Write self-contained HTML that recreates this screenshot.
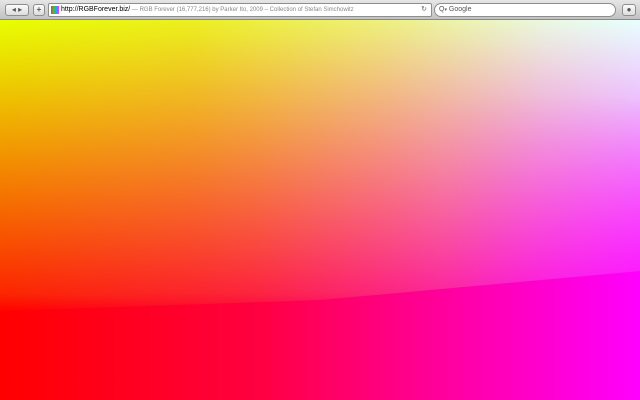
<!DOCTYPE html>
<html><head><meta charset="utf-8"><style>
*{margin:0;padding:0;box-sizing:border-box}
html,body{width:640px;height:400px;overflow:hidden;font-family:"Liberation Sans",sans-serif}
#bar{position:absolute;left:0;top:0;width:640px;height:20px;background:linear-gradient(#e6e6e6,#c2c2c2);border-bottom:1px solid #8a8a8a}
.btn{position:absolute;top:4px;height:12px;border:1px solid #8e8e8e;border-radius:3px;background:linear-gradient(#fbfbfb,#dcdcdc);font-size:8px;color:#555;text-align:center;line-height:10px}
#url{position:absolute;left:48px;top:3px;width:384px;height:14px;background:#fff;border:1px solid #8e8e8e;border-radius:2px;font-size:7px;line-height:12px;white-space:nowrap;overflow:hidden}
#search{position:absolute;left:434px;top:3px;width:182px;height:14px;background:#fff;border:1px solid #8e8e8e;border-radius:7px;font-size:7px;line-height:12px;color:#555;padding-left:4px}
#c{position:absolute;left:0;top:20px;width:640px;height:380px;background:linear-gradient(90deg,#ff0000 0%,#ff0020 20%,#ff0040 40%,#ff0080 60%,#ff00c0 80%,#ff00ff 100%)}
#t{position:absolute;left:0;top:0;width:640px;height:380px;
background:linear-gradient(90deg,#e8ff00 0%,#ecf020 30%,#eef080 60%,#eaf8e0 85%,#e8ffff 100%);
-webkit-mask-image:linear-gradient(#000 0%,rgba(0,0,0,.15) 72%,rgba(0,0,0,0) 77%);
mask-image:linear-gradient(#000 0%,rgba(0,0,0,.15) 72%,rgba(0,0,0,0) 77%);
clip-path:polygon(0 0,640px 0,640px 251px,320px 280px,0 291px)}
#t2{position:absolute;left:0;top:0;width:640px;height:380px;
background:linear-gradient(90deg,rgba(255,0,0,0) 70%,rgba(255,0,255,.5) 100%);
-webkit-mask-image:linear-gradient(rgba(0,0,0,0) 20%,#000 70%);mask-image:linear-gradient(rgba(0,0,0,0) 20%,#000 70%);
clip-path:polygon(0 0,640px 0,640px 251px,320px 280px,0 291px)}
</style></head><body>
<div id="bar">
<div class="btn" style="left:5px;width:24px">◂ ▸</div>
<div class="btn" style="left:33px;width:12px;font-weight:bold">+</div>
<div id="url"><span style="display:inline-block;width:8px;height:8px;margin:2px 2px 0 2px;vertical-align:top;background:linear-gradient(90deg,#f33,#3c3,#39f,#f3f)"></span><span style="color:#000">http://RGBForever.biz/</span><span style="color:#888;font-size:6px"> — RGB Forever (16,777,216) by Parker Ito, 2009 – Collection of Stefan Simchowitz</span><span style="position:absolute;right:4px;top:0;color:#666">↻</span></div>
<div id="search">Q<span style="font-size:5px">▾</span> Google</div>
<div class="btn" style="left:622px;width:14px;border-radius:3px">●</div>
</div>
<div id="c"><div id="t"></div><div id="t2"></div></div>
</body></html>
